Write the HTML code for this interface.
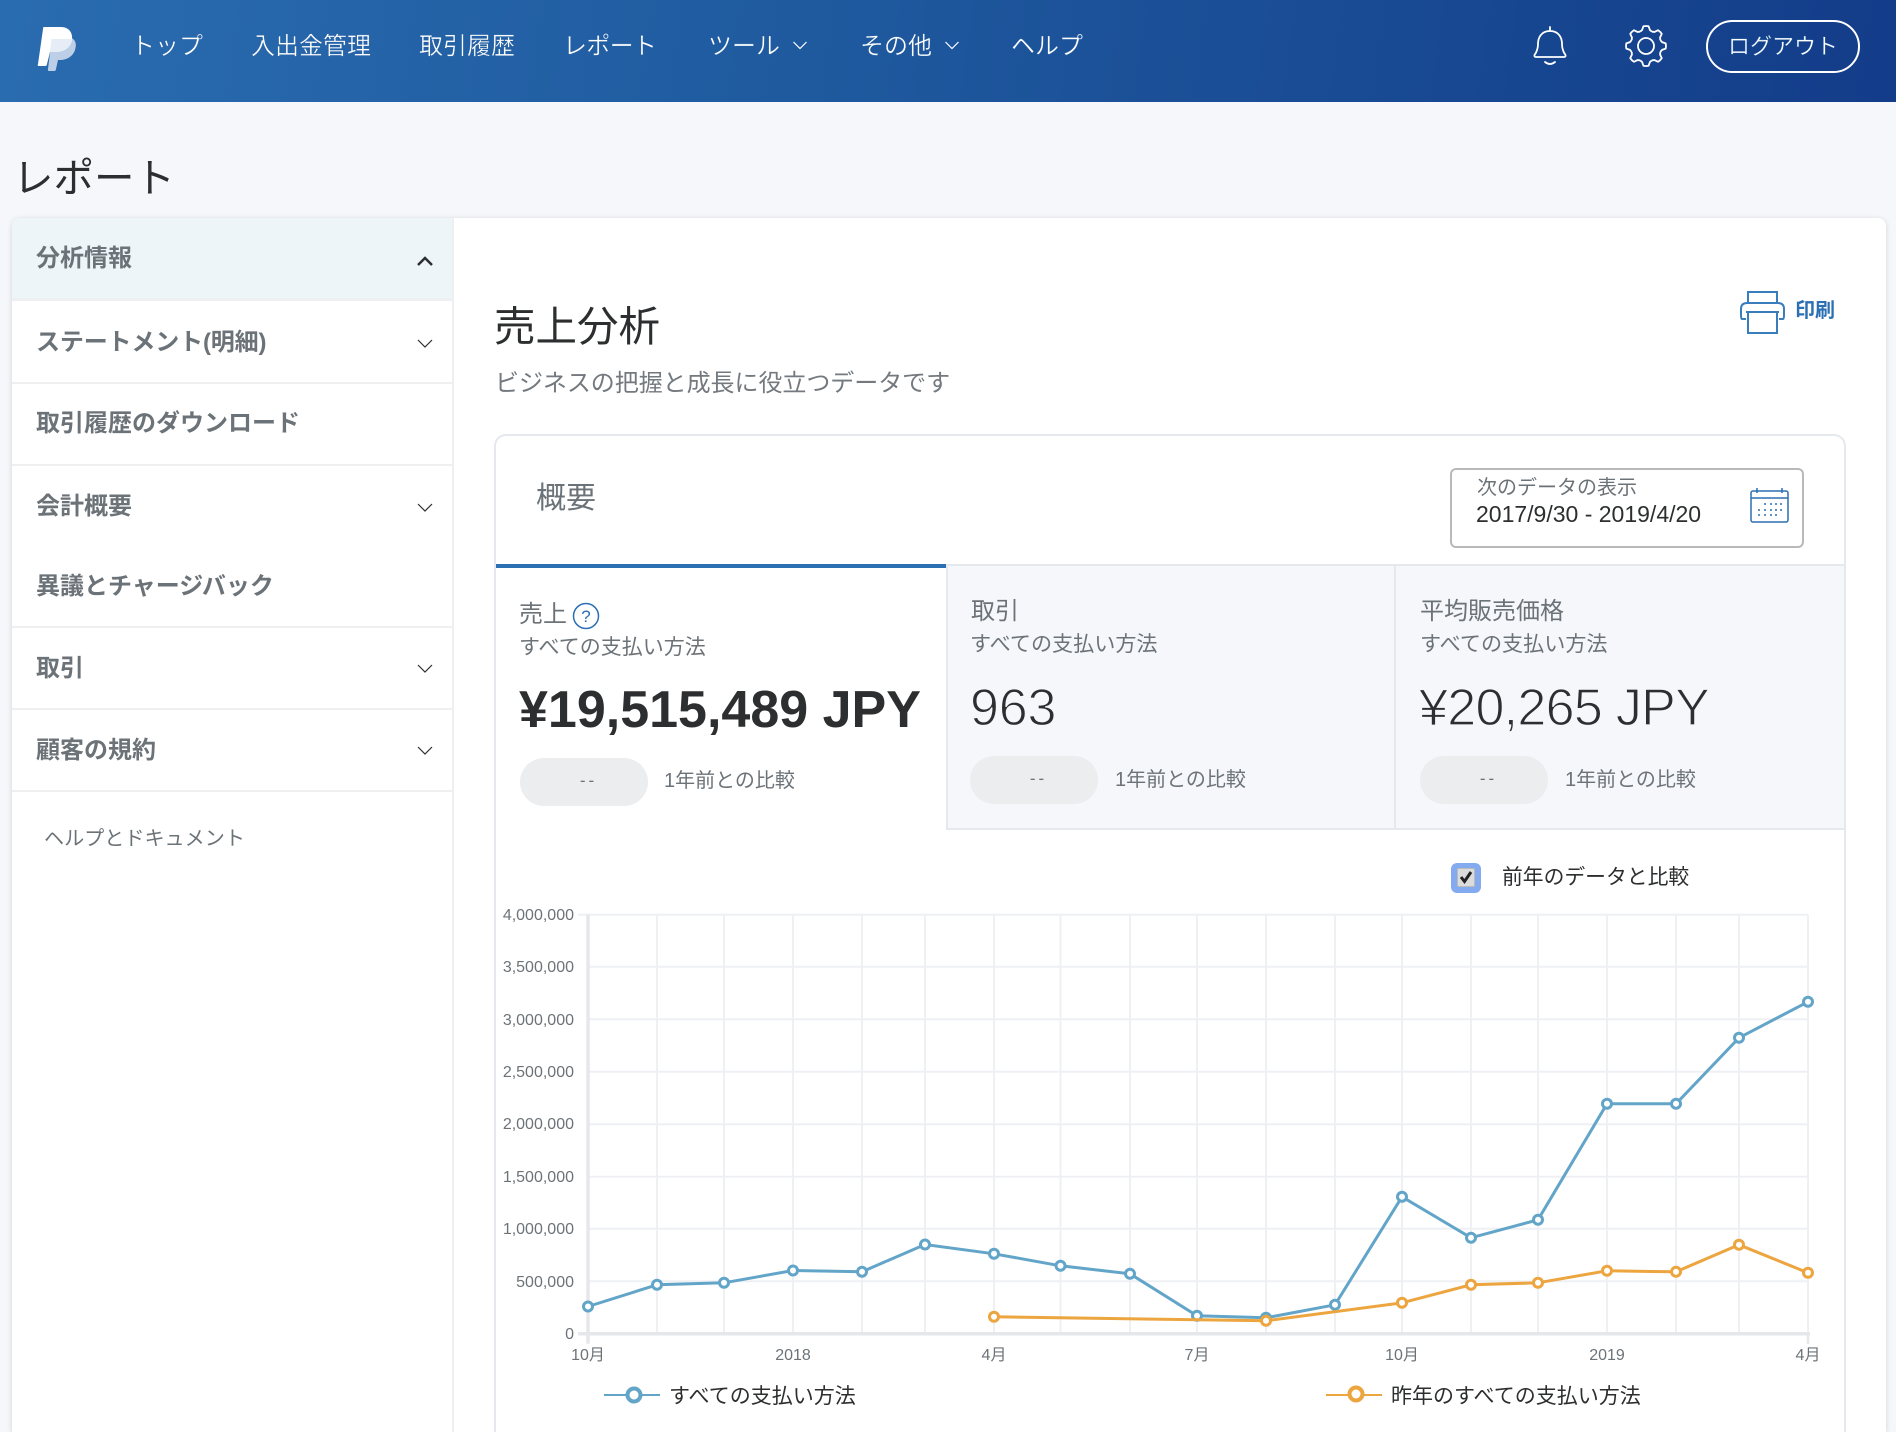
<!DOCTYPE html>
<html lang="ja"><head><meta charset="utf-8"><title>レポート</title>
<style>
*{box-sizing:border-box}
html,body{margin:0;padding:0;width:1896px;height:1432px;overflow:hidden}
body{position:relative;background:#f5f7fb;font-family:"Liberation Sans","Noto Sans CJK JP",sans-serif;color:#2c2e2f}
.a{position:absolute}
.t{position:absolute;white-space:nowrap;height:40px;line-height:40px;margin-top:2px}
.hd{position:absolute;left:0;top:0;width:1896px;height:102px;background:linear-gradient(98deg,#2a6cb0 0%,#1f5a9f 42%,#133c89 100%)}
.nav{color:#fff;font-size:24px;-webkit-text-stroke:.35px #1f5a9f}
.side{font-size:24px;font-weight:700;color:#6c7378;left:36px}
.g{color:#6c7378}
.thin{-webkit-text-stroke:1.2px #f5f7fb}
.pill{position:absolute;width:128px;height:48px;border-radius:24px;background:#ebedef;color:#6c7378;font-size:17px;line-height:46px;text-align:center;letter-spacing:3px;padding-left:9px}
.sd{background:#eeeff1;position:absolute;left:12px;width:440px;height:3px}
</style></head><body>
<div class="hd"></div>
<svg class="a" style="left:0;top:0" width="1896" height="102" fill="none">
<path d="M52 37H66C74 37 77 42 75.5 48C74 56 67 60 60 60H58L56 69Q56 71 54 71H49Q47.5 71 48 69Z" fill="#bccfe6"/>
<path d="M44 27H61C69 27 73 33 72 40C70 49 63 52 55 52H50L47 64Q47 66 45 66H39Q37 66 38 64L43 29Q43 27 44 27Z" fill="#fff"/>
<path d="M51.5 39H71.8C70 49 63 52 55 52H50Z" fill="#e6edf6"/>
<path d="M793.500 42L800 48.500L806.500 42M945.500 42L952 48.500L958.500 42" stroke="#fff" stroke-width="1.2"/>
<path d="M1550 27V31M1550 31C1541 31 1538 38 1538 44C1538 50 1536 53 1534.5 55Q1534 57 1536 57H1564Q1566 57 1565.5 55C1564 53 1562 50 1562 44C1562 38 1559 31 1550 31ZM1545 62Q1550 66 1555 62" stroke="#fff" stroke-width="1.8" stroke-linecap="round"/>
<g transform="translate(1646 46)" stroke="#fff" stroke-width="1.8" stroke-linejoin="round">
<circle r="8"/>
<path id="th" d="M-5.93 -14.32L-3.9 -16L-2.6 -19.7Q0 -20.3 2.6 -19.7L3.9 -16L5.93 -14.32"/>
<use href="#th" transform="rotate(45)"/><use href="#th" transform="rotate(90)"/><use href="#th" transform="rotate(135)"/><use href="#th" transform="rotate(180)"/><use href="#th" transform="rotate(225)"/><use href="#th" transform="rotate(270)"/><use href="#th" transform="rotate(315)"/>
</g>
</svg>
<div class="t nav" style="left:131px;top:25px">トップ</div>
<div class="t nav" style="left:251px;top:25px">入出金管理</div>
<div class="t nav" style="left:419px;top:25px">取引履歴</div>
<div class="t nav" style="left:563px;top:25px;letter-spacing:-.7px">レポート</div>
<div class="t nav" style="left:708px;top:25px">ツール</div>
<div class="t nav" style="left:860px;top:25px">その他</div>
<div class="t nav" style="left:1011px;top:25px">ヘルプ</div>
<div class="a" style="left:1706px;top:20px;width:154px;height:53px;border:2.5px solid #fff;border-radius:27px"></div>
<div class="t nav" style="left:1728px;top:25px;font-size:22px">ログアウト</div>

<div class="t" style="left:13px;top:151px;height:50px;line-height:50px;font-size:40.5px;color:#2c2e2f">レポート</div>

<div class="a" style="left:12px;top:218px;width:1874px;height:1214px;background:#fff;border-radius:8px 8px 0 0;box-shadow:0 1px 6px rgba(0,0,0,.14)"></div>
<div class="a" style="left:12px;top:218px;width:440px;height:80px;background:#eef5f9;border-top-left-radius:8px"></div>
<div class="sd" style="top:298px"></div><div class="sd" style="top:382px;height:2px"></div><div class="sd" style="top:464px;height:2px"></div><div class="sd" style="top:626px;height:2px"></div><div class="sd" style="top:708px;height:2px"></div><div class="sd" style="top:790px;height:2px"></div>
<div class="a" style="left:452px;top:218px;width:2px;height:1214px;background:#eeeff1"></div>
<div class="t side" style="top:237px">分析情報</div>
<div class="t side" style="top:321px;letter-spacing:-.15px">ステートメント(明細)</div>
<div class="t side" style="top:402px">取引履歴のダウンロード</div>
<div class="t side" style="top:485px">会計概要</div>
<div class="t side" style="top:565px">異議とチャージバック</div>
<div class="t side" style="top:647px">取引</div>
<div class="t side" style="top:729px">顧客の規約</div>
<div class="t g" style="left:44px;top:817px;font-size:20.1px">ヘルプとドキュメント</div>
<svg class="a" style="left:0;top:0" width="460" height="800" fill="none" stroke="#2c2e2f">
<path d="M418 265L425 258L432 265" stroke-width="2.5"/>
<path d="M418 340L425 347L432 340M418 504L425 511L432 504M418 665L425 672L432 665M418 747L425 754L432 747" stroke-width="1.2"/>
</svg>

<div class="t" style="left:494px;top:295px;height:60px;line-height:60px;font-size:41.5px;color:#2c2e2f">売上分析</div>
<div class="t g" style="left:495px;top:362px;font-size:24px;color:#73797e;letter-spacing:-.05px">ビジネスの把握と成長に役立つデータです</div>
<div class="t" style="left:1795px;top:289px;font-size:20px;font-weight:700;color:#2c6fb3">印刷</div>

<div class="a" style="left:494px;top:434px;width:1352px;height:998px;border:2px solid #e5e9ee;border-bottom:0;border-radius:12px 12px 0 0"></div>
<div class="t g" style="left:536px;top:477px;font-size:30px">概要</div>

<div class="a" style="left:1450px;top:468px;width:354px;height:80px;border:2px solid #b7b9bb;border-radius:6px"></div>
<div class="t g" style="left:1477px;top:466px;font-size:20px">次のデータの表示</div>
<div class="t" style="left:1476px;top:492px;font-size:23px">2017/9/30 - 2019/4/20</div>

<div class="a" style="left:946px;top:564px;width:898px;height:266px;background:#f5f7fb;border:2px solid #e5e9ee;border-right:0"></div>
<div class="a" style="left:1394px;top:566px;width:2px;height:262px;background:#e5e9ee"></div>
<div class="a" style="left:496px;top:564px;width:450px;height:4px;background:#2c6fb3"></div>

<div class="t g" style="left:519px;top:593px;font-size:24px">売上</div>
<div class="t g" style="left:519px;top:626px;font-size:21px">すべての支払い方法</div>
<div class="t" style="left:519px;top:678px;height:60px;line-height:60px;font-size:52px;font-weight:700">¥19,515,489 JPY</div>
<div class="pill" style="left:520px;top:758px">--</div>
<div class="t g" style="left:664px;top:759px;font-size:20px">1年前との比較</div>

<div class="t g" style="left:971px;top:590px;font-size:24px">取引</div>
<div class="t g" style="left:970px;top:623px;font-size:21.1px">すべての支払い方法</div>
<div class="t thin" style="left:970px;top:676px;height:60px;line-height:60px;font-size:52px;letter-spacing:-.2px">963</div>
<div class="pill" style="left:970px;top:756px">--</div>
<div class="t g" style="left:1115px;top:758px;font-size:20px">1年前との比較</div>

<div class="t g" style="left:1420px;top:590px;font-size:24px">平均販売価格</div>
<div class="t g" style="left:1420px;top:623px;font-size:21.1px">すべての支払い方法</div>
<div class="t thin" style="left:1419px;top:676px;height:60px;line-height:60px;font-size:52px;letter-spacing:-.7px">¥20,265 JPY</div>
<div class="pill" style="left:1420px;top:756px">--</div>
<div class="t g" style="left:1565px;top:758px;font-size:20px">1年前との比較</div>

<div class="a" style="left:1451px;top:863px;width:30px;height:30px;border-radius:6px;background:#84abf0"></div>
<div class="a" style="left:1457px;top:868px;width:18px;height:19px;border-radius:2px;background:#dcdcdc;border:1px solid #bbb"></div>
<div class="t" style="left:1502px;top:856px;font-size:20.8px">前年のデータと比較</div>

<svg class="a" style="left:0;top:0" width="1896" height="1432" fill="none" font-family="Liberation Sans,Noto Sans CJK JP,sans-serif">
<!-- printer -->
<g stroke="#3a7dbc" stroke-width="2">
<path d="M1748 303V292H1777V303"/>
<path d="M1746 319H1742Q1741 319 1741 315V309Q1741 303 1747 303H1778Q1784 303 1784 309V315Q1784 319 1783 319H1779"/>
<path d="M1746 312H1779M1748 312V333H1777V312"/>
</g>
<!-- help -->
<circle cx="586" cy="616" r="12.5" stroke="#2c6fb3" stroke-width="1.5"/>
<text x="586" y="622" text-anchor="middle" font-size="17" fill="#2c6fb3" stroke="none">?</text>
<!-- calendar -->
<g stroke="#2c6fb3" stroke-width="1.5">
<rect x="1751" y="491" width="37" height="31" rx="2"/>
<path d="M1751 498H1788M1757 488V493M1782 488V493"/>
</g>
<g fill="#2c6fb3"><circle cx="1765" cy="504" r="1"/><circle cx="1771" cy="504" r="1"/><circle cx="1776" cy="504" r="1"/><circle cx="1781" cy="504" r="1"/><circle cx="1759" cy="510" r="1"/><circle cx="1765" cy="510" r="1"/><circle cx="1771" cy="510" r="1"/><circle cx="1776" cy="510" r="1"/><circle cx="1781" cy="510" r="1"/><circle cx="1759" cy="515" r="1"/><circle cx="1765" cy="515" r="1"/><circle cx="1771" cy="515" r="1"/><circle cx="1776" cy="515" r="1"/></g>
<!-- checkmark -->
<path d="M1461 877L1464.5 881.500L1471 872" stroke="#222" stroke-width="3"/>
<g transform="translate(0 -.2)">
<!-- grid -->
<g stroke="#eef0f3" stroke-width="2">
<path d="M588 967H1808M588 1019.500H1808M588 1072H1808M588 1124.500H1808M588 1177H1808M588 1229H1808M588 1281.500H1808"/>
<path d="M657 915V1334M724 915V1334M793 915V1334M862 915V1334M925 915V1334M994 915V1334M1060.500 915V1334M1130 915V1334M1197 915V1334M1266 915V1334M1335 915V1334M1402 915V1334M1471 915V1334M1538 915V1334M1607 915V1334M1676 915V1334M1739 915V1334M1808 915V1334"/>
<path d="M578 915H1808"/>
</g>
<path d="M588 915V1344M578 1334H1810" stroke="#e5e7ea" stroke-width="3.500"/>
<path d="M1808 1334V1344" stroke="#e5e7ea" stroke-width="2.500"/>
<!-- blue line -->
<polyline stroke="#62a5c8" stroke-width="3" points="588,1306.700 657,1285 724,1283 793,1270.700 862,1272 925,1244.700 994,1254 1060.500,1266 1130,1274 1197,1316 1266,1318 1335,1305 1402,1197 1471,1238 1538,1220 1607,1104 1676,1104 1739,1038 1808,1002"/>
<g stroke="#62a5c8" stroke-width="3" fill="#fff">
<circle cx="588" cy="1306.700" r="4.500"/><circle cx="657" cy="1285" r="4.500"/><circle cx="724" cy="1283" r="4.500"/><circle cx="793" cy="1270.700" r="4.500"/><circle cx="862" cy="1272" r="4.500"/><circle cx="925" cy="1244.700" r="4.500"/><circle cx="994" cy="1254" r="4.500"/><circle cx="1060.500" cy="1266" r="4.500"/><circle cx="1130" cy="1274" r="4.500"/><circle cx="1197" cy="1316" r="4.500"/><circle cx="1266" cy="1318" r="4.500"/><circle cx="1335" cy="1305" r="4.500"/><circle cx="1402" cy="1197" r="4.500"/><circle cx="1471" cy="1238" r="4.500"/><circle cx="1538" cy="1220" r="4.500"/><circle cx="1607" cy="1104" r="4.500"/><circle cx="1676" cy="1104" r="4.500"/><circle cx="1739" cy="1038" r="4.500"/><circle cx="1808" cy="1002" r="4.500"/>
</g>
<!-- orange line -->
<polyline stroke="#eca53f" stroke-width="3" points="994,1317 1197,1320 1266,1321 1402,1303 1471,1285 1538,1283 1607,1271 1676,1272 1739,1245 1808,1273"/>
<g stroke="#eca53f" stroke-width="3" fill="#fff">
<circle cx="994" cy="1317" r="4.500"/><circle cx="1266" cy="1321" r="4.500"/><circle cx="1402" cy="1303" r="4.500"/><circle cx="1471" cy="1285" r="4.500"/><circle cx="1538" cy="1283" r="4.500"/><circle cx="1607" cy="1271" r="4.500"/><circle cx="1676" cy="1272" r="4.500"/><circle cx="1739" cy="1245" r="4.500"/><circle cx="1808" cy="1273" r="4.500"/>
</g>
</g>
<g font-size="16" fill="#6c7378" text-anchor="end">
<text x="574" y="920">4,000,000</text><text x="574" y="972">3,500,000</text><text x="574" y="1025">3,000,000</text><text x="574" y="1077">2,500,000</text><text x="574" y="1129">2,000,000</text><text x="574" y="1182">1,500,000</text><text x="574" y="1234">1,000,000</text><text x="574" y="1287">500,000</text><text x="574" y="1339">0</text>
</g>
<g font-size="16" fill="#6c7378" text-anchor="middle">
<text x="588" y="1360">10月</text><text x="793" y="1360">2018</text><text x="994" y="1360">4月</text><text x="1197" y="1360">7月</text><text x="1402" y="1360">10月</text><text x="1607" y="1360">2019</text><text x="1808" y="1360">4月</text>
</g>
<!-- legends -->
<path d="M604 1395H660" stroke="#62a5c8" stroke-width="2"/>
<circle cx="634" cy="1395" r="6.500" stroke="#62a5c8" stroke-width="4" fill="#fff"/>
<path d="M1326 1395H1382" stroke="#eca53f" stroke-width="2"/>
<circle cx="1356" cy="1394" r="6.500" stroke="#eca53f" stroke-width="4" fill="#fff"/>
</svg>
<div class="t" style="left:669px;top:1375px;font-size:21px">すべての支払い方法</div>
<div class="t" style="left:1391px;top:1375px;font-size:21px">昨年のすべての支払い方法</div>
</body></html>
